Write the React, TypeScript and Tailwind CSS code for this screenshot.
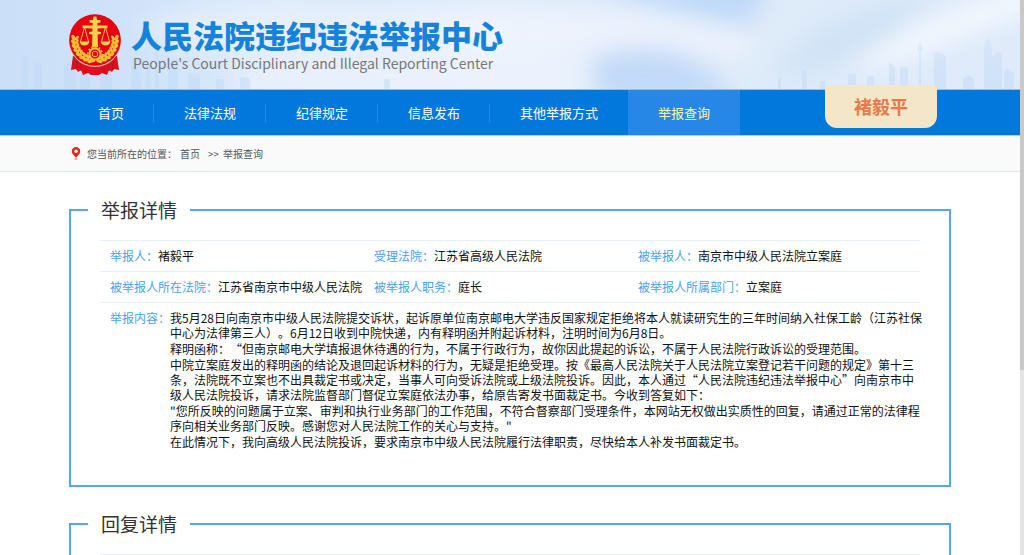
import React from "react";

const navItems = ["首页", "法律法规", "纪律规定", "信息发布", "其他举报方式", "举报查询"];

const facts: [string, string][] = [
  ["举报人：", "褚毅平"],
  ["受理法院：", "江苏省高级人民法院"],
  ["被举报人：", "南京市中级人民法院立案庭"],
  ["被举报人所在法院：", "江苏省南京市中级人民法院"],
  ["被举报人职务：", "庭长"],
  ["被举报人所属部门：", "立案庭"],
];

const paragraphs: string[][] = [
  [
    "我5月28日向南京市中级人民法院提交诉状，起诉原单位南京邮电大学违反国家规定拒绝将本人就读研究生的三年时间纳入社保工龄（江苏社保",
    "中心为法律第三人）。6月12日收到中院快递，内有释明函并附起诉材料，注明时间为6月8日。",
  ],
  ["释明函称：“但南京邮电大学填报退休待遇的行为，不属于行政行为，故你因此提起的诉讼，不属于人民法院行政诉讼的受理范围。"],
  [
    "中院立案庭发出的释明函的结论及退回起诉材料的行为，无疑是拒绝受理。按《最高人民法院关于人民法院立案登记若干问题的规定》第十三",
    "条，法院既不立案也不出具裁定书或决定，当事人可向受诉法院或上级法院投诉。因此，本人通过“人民法院违纪违法举报中心”向南京市中",
    "级人民法院投诉，请求法院监督部门督促立案庭依法办事，给原告寄发书面裁定书。今收到答复如下：",
  ],
  [
    "\"您所反映的问题属于立案、审判和执行业务部门的工作范围，不符合督察部门受理条件，本网站无权做出实质性的回复，请通过正常的法律程",
    "序向相关业务部门反映。感谢您对人民法院工作的关心与支持。\"",
  ],
  ["在此情况下，我向高级人民法院投诉，要求南京市中级人民法院履行法律职责，尽快给本人补发书面裁定书。"],
];

function Emblem() {
  const leaves = [0, 1, 2, 3, 4, 5, 6, 7];
  return (
    <svg viewBox="0 0 52 62" className="h-[62px] w-[52px] shrink-0" aria-hidden="true">
      <path d="M4 42 L2 56 L7 55 L9 58 L12 56 L14 61 L19 59 L22 61 L30 61 L33 59 L38 61 L40 56 L43 58 L45 55 L50 56 L48 42 Z" fill="#dc0f1e" />
      <path d="M8 47 L8 56 M12 50 L12 57 M40 50 L40 57 M44 47 L44 56 M17 53 L17 59 M35 53 L35 59" stroke="#b50d1a" strokeWidth="0.9" />
      <circle cx="26" cy="27" r="26" fill="#f0b0a8" />
      <circle cx="26" cy="26" r="25.8" fill="#e60012" />
      <g fill="#f6bd35">
        {leaves.map((i) => {
          const turn = 186 - i * 12;
          const a = (turn * Math.PI) / 180;
          const x = 26 + 21.6 * Math.cos(a);
          const y = 26 + 21.6 * Math.sin(a);
          const ix = 26 + 18.2 * Math.cos(a);
          const iy = 26 + 18.2 * Math.sin(a);
          return (
            <g key={i}>
              <ellipse cx={x} cy={y} rx="3.2" ry="1.8" transform={`rotate(${turn + 60} ${x} ${y})`} />
              <ellipse cx={ix} cy={iy} rx="2.8" ry="1.5" transform={`rotate(${turn + 120} ${ix} ${iy})`} />
              <ellipse cx={52 - x} cy={y} rx="3.2" ry="1.8" transform={`rotate(${-turn - 60} ${52 - x} ${y})`} />
              <ellipse cx={52 - ix} cy={iy} rx="2.8" ry="1.5" transform={`rotate(${-turn - 120} ${52 - ix} ${iy})`} />
            </g>
          );
        })}
      </g>
      <g fill="#fad34a">
        <path d="M24.6 2.5 L27.4 2.5 L28 6 L31.5 6 L31.5 8.6 L28.4 9 L28.4 11.5 L38.5 11.5 L38.5 14 L28.6 14.4 L28.6 17.5 L32 18 L32 20 L28.6 20.4 L29 33 L23 33 L23.4 20.4 L20 20 L20 18 L23.4 17.5 L23.4 14.4 L13.5 14 L13.5 11.5 L23.6 11.5 L23.6 9 L20.5 8.6 L20.5 6 L24 6 Z" />
        <path d="M10.5 27.5 H20.5 Q19.5 31.5 15.5 31.5 Q11.5 31.5 10.5 27.5 Z M31.5 27.5 H41.5 Q40.5 31.5 36.5 31.5 Q32.5 31.5 31.5 27.5 Z" />
      </g>
      <path d="M15.5 13 L11.4 28 M15.5 13 L19.6 28 M36.5 13 L32.4 28 M36.5 13 L40.6 28" stroke="#fad34a" strokeWidth="0.9" />
      <circle cx="26" cy="40" r="5.6" fill="#e60012" stroke="#f6bd35" strokeWidth="2.2" />
      <circle cx="26" cy="40" r="7.3" fill="none" stroke="#f6bd35" strokeWidth="1.4" strokeDasharray="1.9 1.9" />
      <circle cx="26" cy="40" r="2.8" fill="#e60012" stroke="#f6bd35" strokeWidth="1" />
    </svg>
  );
}

function Sky() {
  return (
    <svg viewBox="0 0 1020 90" preserveAspectRatio="none" className="absolute inset-0 h-full w-full" aria-hidden="true">
      <defs>
        <linearGradient id="base" x1="0" x2="1" y1="0" y2="0">
          <stop offset="0" stopColor="#cbdff8" />
          <stop offset="0.12" stopColor="#cfe2f9" />
          <stop offset="0.3" stopColor="#e0ecfb" />
          <stop offset="0.48" stopColor="#eff4fe" />
          <stop offset="0.56" stopColor="#e9f1fc" />
          <stop offset="0.7" stopColor="#deebf9" />
          <stop offset="1" stopColor="#dfebfa" />
        </linearGradient>
        <linearGradient id="city" x1="0" x2="0" y1="30" y2="90" gradientUnits="userSpaceOnUse">
          <stop offset="0" stopColor="#bdd7f5" stopOpacity="0.25" />
          <stop offset="1" stopColor="#bdd7f5" stopOpacity="0.45" />
        </linearGradient>
        <filter id="soft" x="-10%" y="-60%" width="120%" height="220%">
          <feGaussianBlur stdDeviation="12" />
        </filter>
      </defs>
      <rect width="1020" height="90" fill="url(#base)" />
      <g filter="url(#soft)">
        <path d="M300 -20 H640 V0 Q460 8 300 -4 Z" fill="#d7e7f8" />
        <path d="M610 -24 H770 L750 24 Q690 14 615 -6 Z" fill="#bdd8f7" />
        <path d="M590 60 Q640 38 690 58 Q720 74 730 106 H600 Z" fill="#c2daf8" />
        <path d="M510 20 Q640 12 760 40 L735 60 Q640 34 520 56 Z" fill="#eef3fd" />
        <path d="M770 76 L815 30 L880 4 L940 -8 L880 44 L820 74 Z" fill="#d0e3f6" />
        <path d="M850 66 L920 26 L1040 -20 V6 L940 44 L880 66 Z" fill="#f6f9ff" />
        <path d="M130 24 L260 6 L420 20 L330 60 L180 46 Z" fill="#e7f0fc" />
        <path d="M250 66 H520 V96 H230 Z" fill="#eaf1fd" />
      </g>
      <g fill="url(#city)">
        <path d="M22 90 V56 H28 V90 Z M34 90 V64 H42 V90 Z M64 90 V66 L70 62 L76 66 V90 Z M80 90 V70 H90 V90 Z M100 90 V72 H112 V90 Z" />
        <path d="M131 90 V60 H141 V90 Z M146 90 V66 H150 V90 Z M155 90 V52 L157 48 L159 52 V90 Z M168 90 V60 H178 V90 Z M188 90 V74 H200 V90 Z" />
        <path d="M216 90 V80 H224 V90 Z M240 90 V78 H250 V90 Z M384 90 V80 H390 V90 Z" />
        <path d="M778 90 V80 L781 77 V90 Z M802 90 V73 L805 70 L807 76 V90 Z M820 90 V82 H825 V90 Z M848 90 V75 H856 V90 Z M867 90 V77 H874 V90 Z" />
        <path d="M889 90 V62 L895 68 V90 Z M900 90 V68 H908 V90 Z M919 90 V52 L917 49 L920 43 L923 49 L921 52 V90 Z" />
        <path d="M934 90 V54 L938 52 L946 57 V90 Z M963 90 V80 L969 76 L974 80 V90 Z" />
        <path d="M984 90 V48 L988 36 L992 48 V58 L996 53 H1002 V90 Z M1004 90 V72 L1008 69 L1014 74 V90 Z" />
      </g>
    </svg>
  );
}

function Panel({ title, children }: { title: string; children: React.ReactNode }) {
  return (
    <fieldset className="min-w-0 border-2 border-[#55a5f3] px-[29px] pb-[36px]">
      <legend className="-ml-[12px] px-[13px] text-[19px] leading-[28px] text-[#333]">{title}</legend>
      {children}
    </fieldset>
  );
}

export default function App() {
  return (
    <div className="flex h-screen overflow-hidden bg-white font-['Noto_Sans_CJK_SC',sans-serif] [text-spacing-trim:space-all]">
      <div className="min-w-0 flex-1 overflow-hidden">
        <header className="relative border-b border-[#94c0f0]">
          <Sky />
          <div className="relative mx-auto flex h-[89px] max-w-[882px] items-center gap-[10px]">
            <Emblem />
            <div>
              <h1 className="text-[31px] leading-[36px] font-black whitespace-nowrap text-[#1583dc]">人民法院违纪违法举报中心</h1>
              <p className="pl-[2px] text-[14px] leading-[20px] whitespace-nowrap text-[#777]">People's Court Disciplinary and Illegal Reporting Center</p>
            </div>
          </div>
        </header>

        <nav className="relative border-b border-[#a9d0f5] bg-[#0277dc]">
          <div className="mx-auto flex max-w-[884px] items-start justify-between">
            <ul className="flex text-[13px] leading-[45px] whitespace-nowrap text-white">
              {navItems.map((item, i) => (
                <li key={item} className="flex items-center">
                  <a href="#" className={i === 5 ? "bg-[#2787e6] px-[30px] text-[#f6f8a4]" : "px-[30px]"}>{item}</a>
                  {i < 4 && <span className="-ml-px h-[18px] w-px bg-[#2b8de6]" />}
                </li>
              ))}
            </ul>
            <a href="#" className="-mt-[5px] mr-[15px] rounded-t-[3px] rounded-b-[12px] bg-[#f4e6c8] px-[29px] text-[18px] leading-[43px] font-bold text-[#e67a4a]">褚毅平</a>
          </div>
        </nav>

        <div className="border-b border-[#dce8f2] bg-[#fafafa]">
          <div className="mx-auto flex h-[35px] max-w-[884px] items-center pl-[3px] text-[10px] whitespace-nowrap text-[#555]">
            <svg viewBox="0 0 10 13" className="mr-[6px] h-[13px] w-[10px]" aria-hidden="true">
              <path d="M5 0 A4.2 4.2 0 0 1 9.2 4.2 C9.2 7 6.5 8.5 5 11 C3.5 8.5 0.8 7 0.8 4.2 A4.2 4.2 0 0 1 5 0 Z" fill="#dc2a18" />
              <circle cx="5" cy="4.2" r="1.7" fill="#fff" />
              <ellipse cx="5" cy="12" rx="1.8" ry="0.8" fill="#e88578" />
            </svg>
            <span>您当前所在的位置：</span>
            <a href="#" className="mr-[8px] ml-[3px]">首页</a>
            <span className="mr-[4px]">&gt;&gt;</span>
            <span>举报查询</span>
          </div>
        </div>

        <main className="mx-auto flex max-w-[882px] flex-col gap-[23px] pt-[24px]">
          <Panel title="举报详情">
            <dl className="mt-[16px] text-[12px] whitespace-nowrap">
              <div className="border-t border-[#e6f1fc]">
                {[0, 3].map((start) => (
                  <div key={start} className="grid grid-cols-3 border-b border-[#e6f1fc] pr-[18px] pl-[10px] leading-[30px]">
                    {facts.slice(start, start + 3).map(([label, value]) => (
                      <div key={label} className="flex">
                        <dt className="text-[#4a9ff5]">{label}</dt>
                        <dd className="text-[#111]">{value}</dd>
                      </div>
                    ))}
                  </div>
                ))}
              </div>
              <div className="flex pt-[7px] pl-[10px] leading-[15px]">
                <dt className="text-[#4a9ff5]">举报内容：</dt>
                <dd className="flex flex-col gap-px text-[#111]">
                  {paragraphs.map((lines) => (
                    <p key={lines[0]}>
                      {lines.map((line) => (
                        <span key={line} className="block">{line}</span>
                      ))}
                    </p>
                  ))}
                </dd>
              </div>
            </dl>
          </Panel>
          <Panel title="回复详情">
            <div className="mt-[16px] h-[120px] border-t border-[#e6f1fc]" />
          </Panel>
        </main>
      </div>
      <div className="w-[4px] shrink-0 bg-[#e4e4e4]" aria-hidden="true">
        <div className="h-2/3 bg-[#c9c9c9]" />
      </div>
    </div>
  );
}
